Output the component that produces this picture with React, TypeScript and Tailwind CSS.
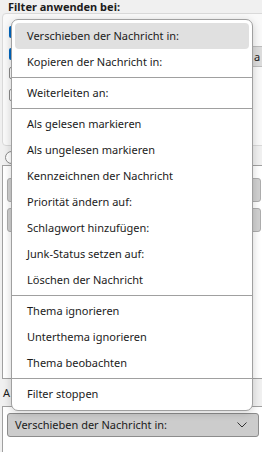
import React from "react";

const groups: string[][] = [
  ["Verschieben der Nachricht in:", "Kopieren der Nachricht in:"],
  ["Weiterleiten an:"],
  [
    "Als gelesen markieren",
    "Als ungelesen markieren",
    "Kennzeichnen der Nachricht",
    "Priorität ändern auf:",
    "Schlagwort hinzufügen:",
    "Junk-Status setzen auf:",
    "Löschen der Nachricht",
  ],
  ["Thema ignorieren", "Unterthema ignorieren", "Thema beobachten"],
  ["Filter stoppen"],
];

function Chevron() {
  return (
    <svg width="10" height="6" viewBox="0 0 10 6" className="block">
      <polyline points="0.5,0.5 5,5 9.5,0.5" fill="none" stroke="#333" strokeWidth="1" />
    </svg>
  );
}

export default function App() {
  return (
    <div
      className="relative w-[262px] h-[452px] overflow-hidden bg-[#f0f0f0] text-[#1b1b1b]"
      style={{ fontFamily: '"Noto Sans", "Open Sans", sans-serif' }}
    >
      {/* Title */}
      <div className="h-[13px] pl-[8px] pt-[1px] text-[11px] font-bold leading-[12px]">
        Filter anwenden bei:
      </div>

      {/* Top panel */}
      <div className="ml-[2px] w-[264px] h-[133px] rounded-[4px] border border-[#d9d9d9] bg-[#f9f9f9] flex flex-col pl-[6px]">
        <div className="mt-[12px] w-[13px] h-[12px] rounded-[2px] bg-[#0067c0]" />
        <div className="mt-[8px] flex items-start justify-between">
          <div className="mt-[2px] w-[13px] h-[12px] rounded-[2px] bg-[#0067c0]" />
          <div className="w-[16px] h-[21px] border border-[#bcbcbc] bg-[#dcdcdc] rounded-l-[3px] pl-[4px] text-[11px] leading-[20px]">
            a
          </div>
        </div>
        <div className="mt-[0px] w-[13px] h-[12px] rounded-[2px] border border-[#8a8a8a] bg-white" />
        <div className="mt-[10px] w-[13px] h-[12px] rounded-[2px] border border-[#8a8a8a] bg-white" />
      </div>

      {/* Radio row */}
      <div className="h-[19px] pl-[5px] pt-[5px]">
        <div className="w-[13px] h-[13px] rounded-full border border-[#8a8a8a] bg-white" />
      </div>

      {/* Conditions list */}
      <div className="ml-[2px] w-[264px] h-[214px] border border-[#a0a0a0] bg-white flex flex-col gap-[6px] pt-[12px] pl-[4px]">
        <div className="w-[254px] h-[24px] rounded-[3px] border border-[#adadad] bg-[#d0d0d0]" />
        <div className="w-[254px] h-[24px] rounded-[3px] border border-[#adadad] bg-[#d0d0d0]" />
      </div>

      {/* Actions label */}
      <div className="h-[27px] pl-[3px] pt-[6px] text-[11px] leading-[16px]">A</div>

      {/* Actions list */}
      <div className="ml-[2px] w-[264px] h-[60px] border border-[#a0a0a0] bg-white pt-[6px] pl-[4px]">
        <div className="w-[252px] h-[24px] rounded-[3px] border border-[#8c8c8c] bg-[#cccccc] flex items-center justify-between pl-[7px] pr-[11px] text-[11px]">
          <span>Verschieben der Nachricht in:</span>
          <Chevron />
        </div>
      </div>

      {/* Popup menu */}
      <div className="absolute left-[11px] top-[19px] w-[242px] rounded-[7px] border border-[#a0a0a0] bg-white px-[3px] py-[3px] shadow-[0_2px_8px_rgba(0,0,0,0.18)]">
        {groups.map((g, gi) => (
          <div key={gi}>
            {gi > 0 && <div className="-mx-[3px] my-[2px] h-px bg-[#a0a0a0]" />}
            {g.map((label, i) => (
              <div
                key={label}
                className={
                  "h-[26px] flex items-center pl-[12px] text-[11px] rounded-[4px] " +
                  (gi === 0 && i === 0 ? "bg-[#e0e0e0]" : "")
                }
              >
                {label}
              </div>
            ))}
          </div>
        ))}
      </div>
    </div>
  );
}
